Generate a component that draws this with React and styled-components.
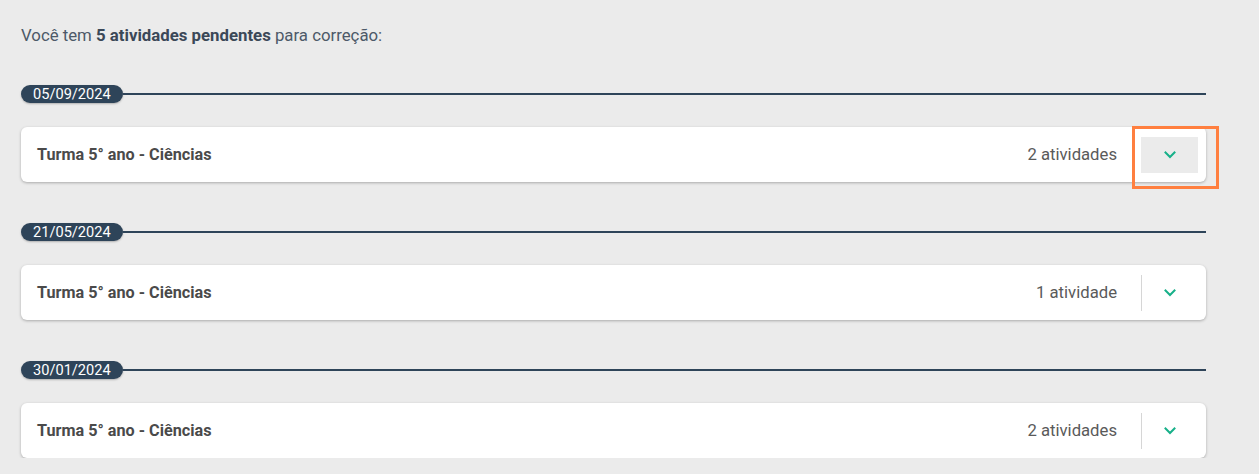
import React from 'react';
import styled, { createGlobalStyle } from 'styled-components';

const GlobalStyle = createGlobalStyle`
  body {
    margin: 0;
    background: #ebebeb;
    font-family: Roboto, "Liberation Sans", sans-serif;
  }
`;

const groups = [
    { date: '05/09/2024', title: 'Turma 5° ano - Ciências', count: '2 atividades', focused: true },
    { date: '21/05/2024', title: 'Turma 5° ano - Ciências', count: '1 atividade' },
    { date: '30/01/2024', title: 'Turma 5° ano - Ciências', count: '2 atividades' },
];

export default function App() {
    return (
        <Page>
            <GlobalStyle />
            <Intro>
                Você tem <strong>5 atividades pendentes</strong> para correção:
            </Intro>
            <List>
                {groups.map((g) => (
                    <Group key={g.date}>
                        <DateRow>
                            <DateChip>{g.date}</DateChip>
                            <Rule />
                        </DateRow>
                        <Card>
                            <Title>{g.title}</Title>
                            <Count>{g.count}</Count>
                            <ToggleButton $focused={g.focused} aria-label="Expandir">
                                <svg width="12" height="8" viewBox="0 0 12 8" fill="none">
                                    <path d="M1.5 1.5L6 6l4.5-4.5" stroke="#17b089" strokeWidth="2" strokeLinecap="square" />
                                </svg>
                                {g.focused && <FocusRing />}
                            </ToggleButton>
                        </Card>
                    </Group>
                ))}
            </List>
        </Page>
    );
}

const Page = styled.div`
    padding: 25px 53px 0 21px;
`;

const Intro = styled.p`
    margin: 0;
    font-size: 16.8px;
    line-height: 20px;
    color: #4d5968;
    strong {
        font-weight: 700;
        color: #3b4858;
    }
`;

const List = styled.div`
    display: flex;
    flex-direction: column;
    gap: 41px;
    margin-top: 40px;
`;

const Group = styled.section`
    display: flex;
    flex-direction: column;
    gap: 24px;
`;

const DateRow = styled.div`
    display: flex;
    align-items: center;
`;

const DateChip = styled.span`
    height: 18px;
    line-height: 18px;
    padding: 0 12px;
    border-radius: 9px;
    background: #2e4459;
    color: #fff;
    font-size: 14.6px;
    box-shadow: 0 1px 2px rgba(0, 0, 0, 0.25);
`;

const Rule = styled.div`
    flex: 1;
    height: 2px;
    background: #2e4459;
`;

const Card = styled.div`
    display: flex;
    align-items: center;
    height: 55px;
    padding: 0 8px 0 16px;
    background: #fff;
    border-radius: 6px;
    box-shadow: 0 1px 3px rgba(0, 0, 0, 0.28);
`;

const Title = styled.h3`
    flex: 1;
    margin: 0;
    font-size: 16.2px;
    font-weight: 700;
    color: #4a4a4a;
`;

const Count = styled.span`
    margin-right: 24px;
    font-size: 16.7px;
    color: #5a5a5a;
`;

const ToggleButton = styled.button`
    position: relative;
    display: flex;
    align-items: center;
    justify-content: center;
    width: 57px;
    height: 36px;
    padding: 0;
    border: 0;
    border-left: 1px solid ${(p) => (p.$focused ? '#ebebeb' : '#d6d6d6')};
    background: ${(p) => (p.$focused ? '#ebebeb' : 'transparent')};
    cursor: pointer;
`;

const FocusRing = styled.span`
    position: absolute;
    top: -11px;
    left: -10px;
    right: -21px;
    bottom: -16px;
    border: 3px solid #ff7f3f;
    pointer-events: none;
`;
